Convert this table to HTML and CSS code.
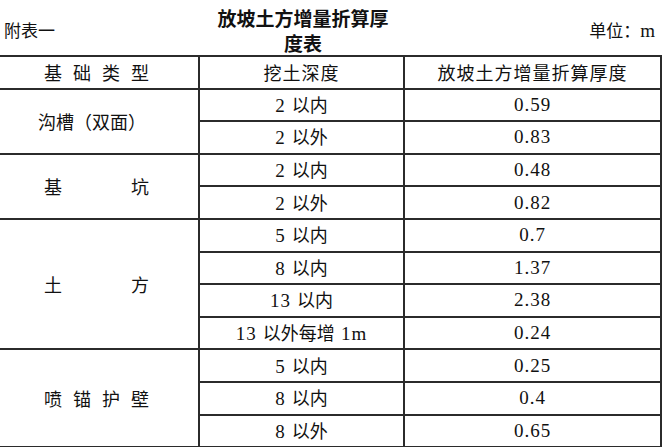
FILE: index.html
```html
<!DOCTYPE html>
<html lang="zh-CN">
<head>
<meta charset="utf-8">
<link rel="stylesheet" href="styles.css">
</head>
<body>
<div class="page">
  <div class="top">
    <div class="left-label">附表一</div>
    <div class="title">放坡土方增量折算厚度表</div>
    <div class="unit">单位：<span class="lat">m</span></div>
  </div>
  <table class="tbl">
    <colgroup>
      <col class="c1"><col class="c2"><col class="c3">
    </colgroup>
    <thead>
      <tr>
        <th class="first"><div class="dist"><span>基</span><span>础</span><span>类</span><span>型</span></div></th>
        <th class="hd">挖土深度</th>
        <th class="hd">放坡土方增量折算厚度</th>
      </tr>
    </thead>
    <tbody>
      <tr class="grp">
        <td class="first" rowspan="2"><div class="plain">沟槽（双面）</div></td>
        <td><span class="lat">2</span> 以内</td>
        <td class="lat">0.59</td>
      </tr>
      <tr>
        <td><span class="lat">2</span> 以外</td>
        <td class="lat">0.83</td>
      </tr>
      <tr class="grp">
        <td class="first" rowspan="2"><div class="dist"><span>基</span><span>坑</span></div></td>
        <td><span class="lat">2</span> 以内</td>
        <td class="lat">0.48</td>
      </tr>
      <tr>
        <td><span class="lat">2</span> 以外</td>
        <td class="lat">0.82</td>
      </tr>
      <tr class="grp">
        <td class="first" rowspan="4"><div class="dist"><span>土</span><span>方</span></div></td>
        <td><span class="lat">5</span> 以内</td>
        <td class="lat">0.7</td>
      </tr>
      <tr>
        <td><span class="lat">8</span> 以内</td>
        <td class="lat">1.37</td>
      </tr>
      <tr>
        <td><span class="lat">13</span> 以内</td>
        <td class="lat">2.38</td>
      </tr>
      <tr>
        <td><span class="lat">13</span> 以外每增 <span class="lat">1m</span></td>
        <td class="lat">0.24</td>
      </tr>
      <tr class="grp">
        <td class="first" rowspan="3"><div class="dist"><span>喷</span><span>锚</span><span>护</span><span>壁</span></div></td>
        <td><span class="lat">5</span> 以内</td>
        <td class="lat">0.25</td>
      </tr>
      <tr>
        <td><span class="lat">8</span> 以内</td>
        <td class="lat">0.4</td>
      </tr>
      <tr>
        <td><span class="lat">8</span> 以外</td>
        <td class="lat">0.65</td>
      </tr>
    </tbody>
  </table>
</div>
</body>
</html>
```
FILE: styles.css
```css
html, body {
  margin: 0;
  padding: 0;
  background: #ffffff;
}
body {
  font-family: "Noto Sans CJK SC", "Noto Sans", sans-serif;
  color: #111111;
  font-size: 18px;
}
.page {
  width: 666px;
  height: 447px;
  overflow: hidden;
}
.top {
  height: 55px;
  display: grid;
  grid-template-columns: 213px 180px 1fr;
  align-items: center;
}
.left-label {
  padding-left: 4px;
  font-size: 17px;
  line-height: 20px;
  margin-top: 5px;
}
.title {
  font-weight: bold;
  font-size: 19px;
  line-height: 25px;
  text-align: center;
  margin-top: 5px;
}
.unit {
  text-align: right;
  padding-right: 10px;
  font-size: 17px;
  line-height: 20px;
  margin-top: 6px;
}
.lat {
  font-family: "Liberation Serif", "Noto Sans CJK SC", serif;
  font-size: 19px;
  letter-spacing: 1px;
}
.tbl {
  border-collapse: collapse;
  table-layout: fixed;
  width: 661px;
}
.c1 { width: 199px; }
.c2 { width: 205px; }
.c3 { width: 257px; }
.tbl th, .tbl td {
  border: 2px solid #2b2b2b;
  height: 30.6px;
  padding: 0;
  text-align: center;
  vertical-align: middle;
  font-weight: normal;
  line-height: 20px;
  word-spacing: 2px;
}
.tbl .first {
  border-left: none;
  text-align: left;
}
.tbl .hd {
  letter-spacing: 1px;
}
.dist {
  width: 105px;
  margin-left: 44px;
  display: flex;
  justify-content: space-between;
}
.plain {
  margin-left: 38px;
}
```
